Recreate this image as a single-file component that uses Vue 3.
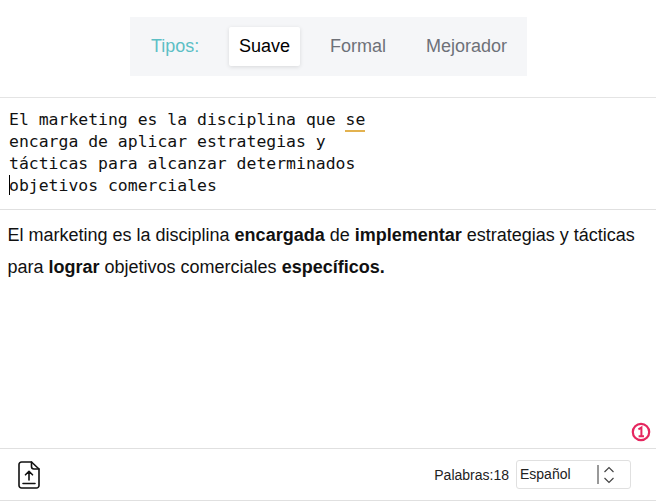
<template>
  <div class="page">
    <header class="top">
      <nav class="tabs">
        <span class="label">Tipos:</span>
        <span class="tab active">Suave</span>
        <span class="tab">Formal</span>
        <span class="tab">Mejorador</span>
      </nav>
    </header>
    <section class="source">
      <div class="code">El marketing es la disciplina que <span class="mark">se</span></div>
      <div class="code">encarga de aplicar estrategias y</div>
      <div class="code">tácticas para alcanzar determinados</div>
      <div class="code caretline"><i class="caret"></i>objetivos comerciales</div>
    </section>
    <section class="result">
      <p>El marketing es la disciplina <b>encargada</b> de <b>implementar</b> estrategias y tácticas para <b>lograr</b> objetivos comerciales <b>específicos.</b></p>
      <span class="badge">
        <svg width="20" height="20" viewBox="0 0 20 20"><circle cx="10" cy="10" r="8.2" fill="none" stroke="#e5265f" stroke-width="2.2"/><path d="M7.400 7.400 10.400 5.600V14.500M7.600 14.300h5.400" fill="none" stroke="#e5265f" stroke-width="2"/></svg>
      </span>
    </section>
    <footer class="foot">
      <svg class="upload" width="22" height="28" viewBox="0 0 22 28" fill="none" stroke="#111" stroke-width="1.600" stroke-linecap="round" stroke-linejoin="round">
        <path d="M13.500 1H3.500A2.500 2.500 0 0 0 1 3.500V24.500A2.500 2.500 0 0 0 3.500 27H18.500A2.500 2.500 0 0 0 21 24.500V8Z"/>
        <path d="M13.500 1V5.500A2.500 2.500 0 0 0 16 8H21"/>
        <path d="M11 19V10.500M7.500 13.800 11 10.300 14.500 13.800M5 22.500H17"/>
      </svg>
      <div class="right">
        <span class="count">Palabras:18</span>
        <div class="select">
          <span class="lang">Español</span>
          <span class="sep"></span>
          <svg width="14" height="22" viewBox="0 0 14 22" fill="none" stroke="#444" stroke-width="1.200"><path d="M2.500 8 7 3.500 11.500 8M2.500 14 7 18.500 11.500 14"/></svg>
        </div>
      </div>
    </footer>
  </div>
</template>

<script setup>
</script>

<style>
html, body { margin: 0; background: #fff; }
</style>

<style scoped>
.page {
  width: 656px;
  height: 501px;
  display: flex;
  flex-direction: column;
  font-family: "Liberation Sans", Arial, sans-serif;
  color: #000;
  overflow: hidden;
}
.top {
  height: 98px;
  box-sizing: border-box;
  padding-top: 17px;
  display: flex;
  justify-content: center;
  align-items: flex-start;
  background: #fff;
  border-bottom: 1px solid #e4e4e4;
}
.tabs {
  width: 397px;
  height: 59px;
  box-sizing: border-box;
  margin-left: 1px;
  padding: 10px 0 0 21px;
  background: #f5f6f8;
  display: flex;
  align-items: flex-start;
  font-size: 18px;
}
.label {
  color: #5cbfc5;
  width: 78px;
  line-height: 39px;
}
.tab {
  color: #6e7178;
  line-height: 39px;
  padding: 0 11px;
  margin-right: 18px;
}
.tab:last-child { margin-right: 0; }
.active {
  padding: 0 10px;
  margin-right: 19px;
  background: #fff;
  color: #000;
  box-shadow: 0 1px 4px rgba(0, 0, 0, 0.12);
  border-radius: 2px;
}
.source {
  height: 112px;
  box-sizing: border-box;
  padding: 11px 0 0 9px;
  border-bottom: 1px solid #e0e0e0;
}
.code {
  font-family: "DejaVu Sans Mono", monospace;
  font-size: 16.45px;
  line-height: 22px;
  height: 22px;
  color: #111;
  white-space: pre;
  position: relative;
}
.mark {
  border-bottom: 2px solid #e3b24f;
  padding-bottom: 1px;
}
.caret {
  position: absolute;
  left: 0;
  top: 0;
  width: 1px;
  height: 20px;
  background: #000;
}
.result {
  flex: 1;
  position: relative;
  padding: 9px 8px 0 7.500px;
}
.result p {
  margin: 0;
  font-size: 18px;
  line-height: 32px;
  color: #111;
}
.badge {
  position: absolute;
  right: 5px;
  bottom: 6px;
  width: 20px;
  height: 20px;
}
.foot {
  height: 53px;
  box-sizing: border-box;
  border-top: 1px solid #e0e0e0;
  border-bottom: 1px solid #e0e0e0;
  display: flex;
  align-items: center;
  justify-content: space-between;
  padding: 0 25px 0 18px;
}
.upload { display: block; }
.right {
  display: flex;
  align-items: center;
  gap: 7px;
}
.count {
  font-size: 14px;
  color: #222;
}
.select {
  width: 115px;
  height: 29px;
  box-sizing: border-box;
  border: 1px solid #e0e0e0;
  border-radius: 3px;
  display: flex;
  align-items: center;
  padding-left: 3px;
}
.lang {
  font-size: 14px;
  color: #222;
  width: 77px;
  margin-bottom: 2px;
}
.sep {
  width: 2px;
  height: 19px;
  background: #999;
  margin-right: 3px;
}
</style>
